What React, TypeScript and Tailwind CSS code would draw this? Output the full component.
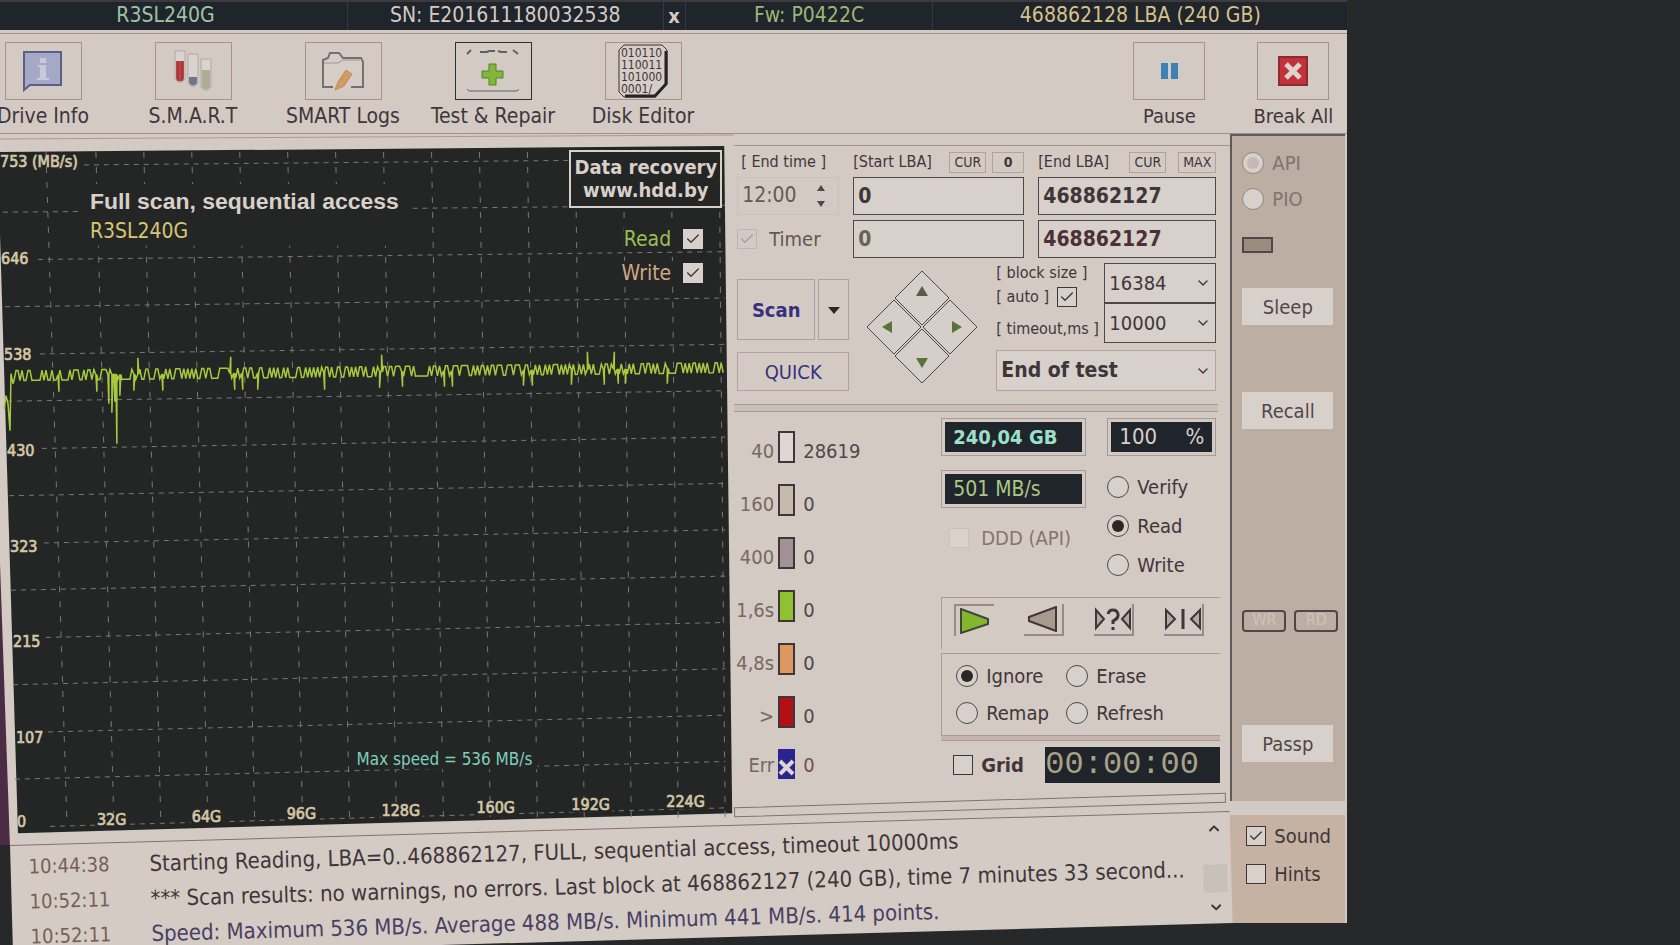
import type { ReactNode } from "react"
import { Check, ChevronDown, ChevronUp } from "lucide-react"

const blocks = [
  { label: "40", count: "28619", color: "bg-[#ded6d0]" },
  { label: "160", count: "0", color: "bg-[#c6bbab]" },
  { label: "400", count: "0", color: "bg-[#a3919a]" },
  { label: "1,6s", count: "0", color: "bg-[#8fc22f]" },
  { label: "4,8s", count: "0", color: "bg-[#dc9861]" },
  { label: ">", count: "0", color: "bg-[#b31015]" },
]

const logs = [
  {
    time: "10:44:38",
    text: "Starting Reading, LBA=0..468862127, FULL, sequential access, timeout 10000ms",
    color: "text-[#40363a]",
  },
  {
    time: "10:52:11",
    text: "*** Scan results: no warnings, no errors. Last block at 468862127 (240 GB), time 7 minutes 33 second...",
    color: "text-[#40363a]",
  },
  {
    time: "10:52:11",
    text: "Speed: Maximum 536 MB/s. Average 488 MB/s. Minimum 441 MB/s. 414 points.",
    color: "text-[#484062]",
  },
]

const yLabels = ["646", "538", "430", "323", "215", "107"]
const xLabels = ["32G", "64G", "96G", "128G", "160G", "192G", "224G"]

// spikes of the speed curve: x, y
const spikes: number[][] = [
  [59, 258], [97, 258], [109, 270], [112, 279], [115, 268], [117, 310], [120, 262], [134, 257], [138, 224],
  [163, 257], [231, 223], [235, 256], [243, 256], [258, 256], [325, 256], [380, 254], [382, 221], [403, 253],
  [445, 253], [453, 253], [524, 252], [533, 252], [572, 251], [588, 218], [605, 251], [615, 218], [619, 250],
  [626, 250], [668, 250],
]

const buildCurve = () => {
  const points: number[][] = [[4, 276], [6, 262], [8, 270], [10, 297], [11, 240], [13, 250]]
  let seed = 11
  let high = true
  for (let x = 14; x < 725; x += 2) {
    seed = (seed * 1103 + 377) % 4099
    const mid = 242 - (x * 8) / 725
    const spike = spikes.find((s) => s[0] >= x && s[0] < x + 2)
    if (spike) {
      points.push([x, mid], spike, [x + 1, mid])
      continue
    }
    if (seed % 10 < 6) high = !high
    points.push([x, high ? mid - 5 : mid + 5])
  }
  return points.map((p) => p.join(",")).join(" ")
}

const CheckBox = ({ id, checked, className = "" }: { id: string; checked?: boolean; className?: string }) => (
  <span className="grid shrink-0 place-items-center">
    <input
      id={id}
      type="checkbox"
      defaultChecked={checked}
      className={`peer h-5 w-5 appearance-none border [grid-area:1/1] ${className || "border-[#40363a] bg-[#d8d0ca]"}`}
    />
    <Check
      strokeWidth={2}
      className={`pointer-events-none hidden h-4 w-4 [grid-area:1/1] peer-checked:block ${id === "timer" ? "text-[#a79ca0]" : "text-[#40363a]"}`}
    />
  </span>
)

const Radio = ({ name, label, checked, className = "" }: { name: string; label: string; checked?: boolean; className?: string }) => (
  <label className={`flex items-center gap-2 text-xl leading-6 ${className}`}>
    <span className="grid shrink-0 place-items-center">
      <input
        type="radio"
        name={name}
        defaultChecked={checked}
        className={`peer h-[22px] w-[22px] appearance-none rounded-full border bg-[#d8d0ca] [grid-area:1/1] ${name === "access" ? "border-[#94877f]" : "border-[#51474a]"}`}
      />
      <span
        className={`pointer-events-none hidden h-3 w-3 rounded-full [grid-area:1/1] peer-checked:block ${name === "access" ? "bg-[#c4bab5]" : "bg-[#2d2629]"}`}
      />
    </span>
    {label}
  </label>
)

const ToolButton = ({ label, active, narrow, children }: { label: string; active?: boolean; narrow?: boolean; children: ReactNode }) => (
  <button className={`flex shrink-0 flex-col items-center gap-1 whitespace-nowrap ${narrow ? "w-[124px]" : "w-[150px]"}`}>
    <span
      className={`flex h-[58px] items-center justify-center border ${narrow ? "w-[72px]" : "w-[77px]"} ${active ? "border-[#2d3038]" : "border-[#a8938c]"}`}
    >
      {children}
    </span>
    <span className={`leading-6 ${narrow ? "text-xl" : "text-[21px]"}`}>{label}</span>
  </button>
)

const TitleBar = () => (
  <header className="grid h-[30px] grid-cols-[347fr_314fr_23fr_247fr_413fr] border-t-2 border-[#3c3a3c] bg-[#20242b] text-center text-[21px] leading-[26px] whitespace-nowrap">
    <div className="border-r border-[#3a364a] pr-4 text-[#9fc3a6]">R3SL240G</div>
    <div className="text-[#d3cbc5]">SN: E201611180032538</div>
    <button className="border-x border-[#3a364a] text-xl leading-6 font-bold text-[#d3cbc5]">x</button>
    <div className="border-r border-[#3a364a] text-[#99b775]">Fw: P0422C</div>
    <div className="text-[#d5c28c]">468862128 LBA (240 GB)</div>
  </header>
)

const Toolbar = () => (
  <div className="mt-[3px] flex h-[101px] items-start justify-between overflow-hidden border-y border-[#a08f8a] pt-2">
    <div className="-ml-8 flex">
      <ToolButton label="Drive Info">
        <svg width="44" height="42" viewBox="0 0 44 42">
          <path d="M3 2h37v33H9l-6 5z" fill="#a4a9c8" stroke="#5c5f83" strokeWidth="2" />
          <path d="M19 8h6v5h-6zM17 15h8v13h3v2H16v-2h3V17h-2z" fill="#c9cad8" />
        </svg>
      </ToolButton>
      <ToolButton label="S.M.A.R.T">
        <svg width="38" height="44" viewBox="0 0 38 44" fill="none" stroke="#b0a7a5">
          <path d="M1 2v28q5 7 10 0V2zM14 5v29q5 7 10 0V5zM27 10v28q5 7 10 0V10z" fill="#dad3cf" />
          <path d="M2 12v18q4 5 8 0V12z" fill="#b5474a" stroke="none" />
          <path d="M4 12v20M8 12v20" stroke="#a0282c" />
          <path d="M15 28v6q4 5 8 0v-6z" fill="#6b7691" stroke="none" />
          <path d="M28 21v17q4 5 8 0V21z" fill="#aeab96" stroke="none" />
        </svg>
      </ToolButton>
      <ToolButton label="SMART Logs">
        <svg width="46" height="40" viewBox="0 0 46 40" fill="none" stroke="#77706f" strokeWidth="2">
          <path d="M13 36H3V9l5-2 2-5h9l4 5h18l2 4v25H31" fill="#d5cdc6" />
          <path d="M4 12h14l5-3h17" stroke="#a09896" strokeWidth="1" />
          <path d="m18 31 8-12 6 4-8 12-9 4z" fill="#d19c64" stroke="#c08a5c" strokeWidth="1" />
        </svg>
      </ToolButton>
      <ToolButton label="Test & Repair" active>
        <svg width="60" height="46" viewBox="0 0 60 46" fill="none" stroke="#655d62" strokeWidth="2">
          <path d="m4 6 4-4M17 4h7l2-1h6M35 3l3 1h6M50 2l5 4" />
          <path d="m4 41 2 2h48l2-2" strokeWidth="1" />
          <path d="M26 16h7v7h7v7h-7v7h-7v-7h-7v-7h7z" fill="#83b63d" stroke="#54812c" strokeWidth="1" />
        </svg>
      </ToolButton>
      <ToolButton label="Disk Editor">
        <svg width="54" height="56" viewBox="0 0 54 56">
          <path d="M8 2h38l5 5v34L39 54H8l-5-5V7z" fill="#d6cdc7" stroke="#3c3035" strokeWidth="1" />
          <path d="M50 8v33L39 53H9" fill="none" stroke="#282226" strokeWidth="3" />
          <g fill="#40363a" fontSize="12">
            <text x="5" y="14">010110</text>
            <text x="5" y="26">110011</text>
            <text x="5" y="38">101000</text>
            <text x="5" y="50">0001/</text>
          </g>
        </svg>
      </ToolButton>
    </div>
    <div className="-mr-2 flex">
      <ToolButton label="Pause" narrow>
        <span className="flex gap-[3px]">
          <span className="h-4 w-[7px] bg-[#3f81b4]" />
          <span className="h-4 w-[7px] bg-[#3f81b4]" />
        </span>
      </ToolButton>
      <ToolButton label="Break All" narrow>
        <svg width="30" height="30" viewBox="0 0 30 30">
          <path d="M1 1h28v28H1z" fill="#c1323b" stroke="#8d2a30" strokeWidth="2" />
          <path d="m8 8 14 14M22 8 8 22" stroke="#ddd3ce" strokeWidth="5" />
        </svg>
      </ToolButton>
    </div>
  </div>
)

const Chart = () => (
  <div className="relative">
    <svg viewBox="0 0 735 712" className="block h-auto w-full" fontSize="16">
      <path d="M0 430 10 714H0z" fill="#4c2c45" />
      <path d="M0 5 735 1" stroke="#a99a97" />
      <path d="M0 18 725 12 733 680 18 700 0 100z" fill="#242625" />
      <g stroke="#7d7673" strokeWidth="1" strokeDasharray="5 5">
        {Array.from({ length: 15 }, (_, i) => (
          <line key={`v${i}`} x1={i ? i * 48 + 48 : 46} y1="18" x2={Math.round(67 + i * 47.1)} y2="690" strokeDasharray="6 9" />
        ))}
        {Array.from({ length: 15 }, (_, i) => (
          <line key={`h${i}`} x1={i === 0 ? 84 : (i % 2 ? 2 : 36) + i} y1={31 + i * 47.3} x2="726" y2={25 + i * 46.4} />
        ))}
      </g>
      <polyline points={buildCurve()} fill="none" stroke="#a9c93d" strokeWidth="1.5" />
      <g fill="#d3c6a6" stroke="#d3c6a6" strokeWidth="0.7">
        <text x="0" y="33">753 (MB/s)</text>
        {yLabels.map((label, i) => (
          <text key={label} x={i * 3 + 1} y={130 + i * 96}>{label}</text>
        ))}
        <text x="17" y="694">0</text>
        {xLabels.map((label, i) => (
          <g key={label}>
            <path d={`M${96 + i * 95} ${680 - i * 3}h${i > 2 ? 42 : 34}v14h-${i > 2 ? 42 : 34}z`} fill="#242625" stroke="none" />
            <text x={97 + i * 95} y={692 - i * 3}>{label}</text>
          </g>
        ))}
      </g>
      <path d="M80 50h333v62H80z" fill="#242625" />
      <path d="M350 616h188v20H350z" fill="#242625" />
      <text x="90" y="75" fill="#d8d0ca" fontSize="23" fontWeight="bold" fontFamily="Liberation Sans, sans-serif">
        Full scan, sequential access
      </text>
      <text x="90" y="104" fill="#d8c672" fontSize="21">R3SL240G</text>
      <text x="357" y="632" fill="#7ed0bd" fontSize="17">Max speed = 536 MB/s</text>
    </svg>
    <a
      href="http://www.hdd.by"
      className="absolute top-4 right-3 border-2 border-[#d8d0ca] bg-[#242625] px-[3px] py-1 text-center text-xl leading-[23px] font-bold whitespace-nowrap text-[#d8d0ca]"
    >
      Data recovery
      <br />
      www.hdd.by
    </a>
    <div className="absolute top-[93px] right-[31px] flex flex-col items-end gap-[10px] text-[21px] leading-6">
      <label className="flex items-center gap-3 bg-[#242625] text-[#9dbd55]">
        Read <CheckBox id="showRead" checked className="border-[#d8d0ca] bg-[#d8d0ca]" />
      </label>
      <label className="flex items-center gap-3 bg-[#242625] text-[#cda982]">
        Write <CheckBox id="showWrite" checked className="border-[#d8d0ca] bg-[#d8d0ca]" />
      </label>
    </div>
  </div>
)

const smallButton = "h-[21px] border border-[#b5a09b] px-1 text-sm leading-[18px]"
const lbaInput = "h-[38px] w-full min-w-0 border border-[#51474a] bg-[#d8d0ca] px-1 text-[21px] font-bold"

const Select = ({ id, value, className }: { id: string; value: string; className: string }) => (
  <span className={`grid items-center border bg-[#d8d0ca] ${className}`}>
    <select id={id} defaultValue={value} aria-label={id} className="h-full w-full min-w-0 appearance-none px-1 [grid-area:1/1]">
      <option>{value}</option>
    </select>
    <ChevronDown strokeWidth={2} className="pointer-events-none mr-1 h-4 w-4 justify-self-end [grid-area:1/1]" />
  </span>
)

const Settings = () => (
  <section className="h-[259px] border-t border-[#a08f8a] pt-[6px] pr-[14px] pl-[3px]">
    <div className="grid grid-cols-[102px_170fr_177fr] gap-x-[14px] gap-y-[5px]">
      <label htmlFor="endTime" className="flex h-5 items-center pl-1 text-base whitespace-nowrap">[ End time ]</label>
      <div className="flex h-5 items-center justify-between whitespace-nowrap">
        <label htmlFor="startLba" className="text-base">[Start LBA]</label>
        <span className="flex gap-[6px]">
          <button className={smallButton}>CUR</button>
          <button className={`${smallButton} w-8 font-bold`}>0</button>
        </span>
      </div>
      <div className="flex h-5 items-center justify-between whitespace-nowrap">
        <label htmlFor="endLba" className="text-base">[End LBA]</label>
        <span className="flex gap-3">
          <button className={smallButton}>CUR</button>
          <button className={smallButton}>MAX</button>
        </span>
      </div>
      <div className="flex h-[38px] items-center justify-between border border-[#c9c0b7] pr-3 pl-1 text-[#635a50]">
        <input id="endTime" defaultValue="12:00" className="w-[70px] bg-transparent text-[21px]" />
        <svg width="10" height="22" viewBox="0 0 10 22" fill="#51474a"><path d="M5 0l4 6H1zM5 22l4-6H1z" /></svg>
      </div>
      <input id="startLba" defaultValue="0" className={lbaInput} />
      <input id="endLba" defaultValue="468862127" className={lbaInput} />
      <label className="flex h-[38px] items-center gap-3 text-xl text-[#625757]">
        <CheckBox id="timer" checked className="border-[#c0b3b3]" />
        Timer
      </label>
      <input aria-label="Current LBA" defaultValue="0" className={`${lbaInput} text-[#6b6254]`} />
      <input aria-label="Last LBA" defaultValue="468862127" className={`${lbaInput} text-[#4c3038]`} />
    </div>
    <div className="mt-[5px] flex justify-between">
      <div className="mt-4 w-[112px]">
        <div className="flex gap-[3px]">
          <button className="h-[61px] flex-1 border border-[#b09dae] text-xl font-bold text-[#35317c]">Scan</button>
          <button aria-label="Scan options" className="flex w-[31px] items-center justify-center border border-[#b09dae]">
            <svg width="12" height="8" viewBox="0 0 12 8"><path d="M0 1h12L6 8z" fill="#2d2629" /></svg>
          </button>
        </div>
        <button className="mt-3 h-[39px] w-full border border-[#b5a0a5] text-xl text-[#35317c]">QUICK</button>
      </div>
      <svg width="114" height="114" viewBox="0 0 114 114" className="mt-[7px] shrink-0">
        <g fill="#d6cec8" stroke="#51474a" strokeWidth="1">
          <path d="M56 1 83 28 56 55 29 28zM28 30 55 57 28 84 1 57zM84 30 111 57 84 84 57 57zM56 59 83 86 56 113 29 86z" />
        </g>
        <path d="m50 26 6-10 6 10z" fill="#5a5a48" />
        <path d="m26 51-10 6 10 6zM86 51l10 6-10 6zM50 88l6 10 6-10z" fill="#55753a" />
      </svg>
      <div className="flex w-[220px] flex-col gap-[7px]">
        <div className="flex justify-between">
          <div className="flex flex-col text-base whitespace-nowrap">
            <label htmlFor="block size" className="leading-5">[ block size ]</label>
            <label className="flex h-7 items-center gap-2">[ auto ] <CheckBox id="auto" checked /></label>
            <label htmlFor="timeout" className="mt-2 leading-5">[ timeout,ms ]</label>
          </div>
          <div className="w-[112px] text-xl">
            <Select id="block size" value="16384" className="h-10 border-[#51474a]" />
            <Select id="timeout" value="10000" className="h-10 border-[#51474a]" />
          </div>
        </div>
        <Select id="end action" value="End of test" className="h-[41px] border-[#b5a09b] text-[21px] font-bold" />
      </div>
    </div>
  </section>
)

const Counters = () => (
  <div className="w-[203px] shrink-0 pt-[19px]">
    {blocks.map((block) => (
      <div key={block.label} className="flex h-[53px] items-start text-xl text-[#51474a]">
        <span className="w-11 pt-2 pr-1 text-right leading-6 text-[#76695f]">{block.label}</span>
        <span className={`h-8 w-[17px] border-2 border-[#40363a] ${block.color}`} />
        <span className="pt-2 pl-2 leading-6">{block.count}</span>
      </div>
    ))}
    <div className="flex items-start text-xl text-[#51474a]">
      <span className="w-11 pt-1 pr-1 text-right leading-6 text-[#76695f]">Err</span>
      <svg width="17" height="30" viewBox="0 0 17 30">
        <path d="M0 0h17v30H0z" fill="#29258c" />
        <path d="m2 12 13 13M15 12 2 25" stroke="#ddd5d0" strokeWidth="4" />
      </svg>
      <span className="pt-1 pl-2 leading-6 text-[#75504d]">0</span>
    </div>
  </div>
)

const raised = "flex h-8 w-10 items-center justify-center border-r-2 border-b-2 border-[#978b87]"

const Monitor = () => (
  <div className="min-w-0 flex-1 pt-[6px] pr-[10px]">
    <div className="flex justify-between pr-1 pl-1">
      <div className="flex w-[145px] flex-col gap-[14px]">
        <output className="block h-[38px] border border-[#a99a97] p-[3px]">
          <span className="block h-full bg-[#20242b] px-2 text-xl leading-[30px] font-bold text-[#9ce0cb]">240,04 GB</span>
        </output>
        <output className="block h-[38px] border border-[#a99a97] p-[3px]">
          <span className="block h-full bg-[#20242b] px-2 text-[21px] leading-[30px] text-[#abc785]">501 MB/s</span>
        </output>
        <label className="mt-1 flex items-center gap-3 pl-2 text-xl leading-6 whitespace-nowrap text-[#85736b]">
          <CheckBox id="ddd" className="border-[#cbc2bd] bg-[#d9d2cd]" />
          DDD (API)
        </label>
      </div>
      <div className="flex w-[109px] flex-col gap-[15px]">
        <output className="mb-1 block h-[38px] border border-[#a99a97] p-[3px]">
          <span className="flex h-full justify-between bg-[#20242b] px-2 text-[22px] leading-[30px] text-[#d8d0ca]">
            <span>100</span>
            <span>%</span>
          </span>
        </output>
        <Radio name="mode" label="Verify" />
        <Radio name="mode" label="Read" checked />
        <Radio name="mode" label="Write" />
      </div>
    </div>
    <div className="mt-5 ml-1 flex h-[52px] items-start justify-between border-t border-l border-[#a99a97] pt-[6px] pr-4 pl-3">
      <button aria-label="Forward" className="flex h-8 w-10 items-center justify-center border-t-2 border-l-2 border-[#978b87]">
        <svg width="30" height="26" viewBox="0 0 30 26"><path d="M1 1v24l27-9v-5z" fill="#84b52f" stroke="#40463a" strokeWidth="2" /></svg>
      </button>
      <button aria-label="Backward" className={raised}>
        <svg width="30" height="26" viewBox="0 0 30 26"><path d="M28 1v24L1 15v-4z" fill="#a69b8d" stroke="#40363a" strokeWidth="2" /></svg>
      </button>
      <button aria-label="Random" className={raised}>
        <svg width="36" height="26" viewBox="0 0 36 26" fill="none" stroke="#40363a">
          <path d="M1 4v18l8-9zM35 4v18l-8-9z" fill="#b3a9a1" strokeWidth="2" />
          <path d="M13 8q1-4 5-4t5 4-5 7v3M18 21v3" strokeWidth="3" />
        </svg>
      </button>
      <button aria-label="Butterfly" className={raised}>
        <svg width="36" height="26" viewBox="0 0 36 26" fill="none" stroke="#40363a">
          <path d="M1 4v18l9-9zM35 4v18l-9-9z" fill="#b3a9a1" strokeWidth="2" />
          <path d="M18 3v20" strokeWidth="3" />
        </svg>
      </button>
    </div>
    <div className="mt-1 ml-1 grid grid-cols-[110px_1fr] content-center gap-y-[13px] border-t border-l border-[#a99a97] pt-[10px] pb-[10px] pl-[14px]">
      <Radio name="errors" label="Ignore" checked />
      <Radio name="errors" label="Erase" />
      <Radio name="errors" label="Remap" />
      <Radio name="errors" label="Refresh" />
    </div>
    <div className="ml-1 h-[6px] border-y border-[#a99a97] bg-[#c5b5ae]" />
    <div className="mt-[6px] ml-4 flex items-center justify-between">
      <label className="flex items-center gap-2 text-xl font-bold">
        <CheckBox id="grid" />
        Grid
      </label>
      <time className="block h-9 w-[175px] bg-[#20242b] font-['Liberation_Mono',monospace] text-[32px] leading-9 text-[#aaa287]">00:00:00</time>
    </div>
  </div>
)

const Sidebar = () => (
  <aside className="flex flex-col gap-[14px] border-r-2 border-[#d3cac4] text-xl">
    <div className="flex h-[667px] flex-col items-start border-t-2 border-l-2 border-[#62595c] bg-[#bdaea3] pt-[15px] pl-[10px] text-[#80736f]">
      <Radio name="access" label="API" checked />
      <Radio name="access" label="PIO" className="mt-3" />
      <span className="mt-[26px] h-4 w-[31px] border-2 border-[#51474a] bg-[#9c8b7f]" />
      <button className="mt-[35px] h-[37px] w-[91px] bg-[#d8d0ca] text-[#51474a]">Sleep</button>
      <button className="mt-[67px] h-[37px] w-[91px] bg-[#d8d0ca] text-[#51474a]">Recall</button>
      <div className="mt-[181px] flex gap-2 text-base leading-4 text-[#d0c2b9]">
        <span className="h-[22px] w-11 rounded-sm border-2 border-[#51474a] text-center">WR</span>
        <span className="h-[22px] w-11 rounded-sm border-2 border-[#51474a] text-center">RD</span>
      </div>
      <button className="mt-[93px] h-[37px] w-[91px] bg-[#d8d0ca] text-[#51474a]">Passp</button>
    </div>
    <div className="flex h-[108px] flex-col gap-[14px] bg-[#c5b2a3] pt-[9px] pl-4">
      <label className="flex items-center gap-2 leading-6"><CheckBox id="sound" checked /> Sound</label>
      <label className="flex items-center gap-2 leading-6"><CheckBox id="hints" /> Hints</label>
    </div>
  </aside>
)

// the log hangs slightly tilted, its lower right corner shows the desk
const Log = () => (
  <div className="ml-[10px] flex h-[112px] origin-top-left -rotate-[1.6deg] border-t border-[#80736f] bg-[#d4cbc5]">
    <ol className="min-w-0 flex-1 overflow-hidden pt-1 pl-[18px] text-[22px] leading-[35px] whitespace-nowrap">
      {logs.map((log) => (
        <li key={log.text} className="flex">
          <time className="w-[121px] shrink-0 text-xl leading-[35px] text-[#766154]">{log.time}</time>
          <span className={log.color}>{log.text}</span>
        </li>
      ))}
    </ol>
    <div className="flex w-8 flex-col items-center justify-between py-2">
      <ChevronUp strokeWidth={3} className="h-4 w-4" />
      <span className="mt-5 h-7 w-6 bg-[#c9c1b9]" />
      <ChevronDown strokeWidth={3} className="h-4 w-4" />
    </div>
  </div>
)

const App = () => {
  return (
    <div className="h-screen overflow-hidden bg-[#26282a] font-['DejaVu_Sans_Condensed','DejaVu_Sans',sans-serif] text-[#40363a]">
      <main className="w-[80.2%]">
        <TitleBar />
        <div className="flow-root bg-[#d3cac4]">
          <Toolbar />
        </div>
        <div className="grid grid-cols-[1230fr_117fr] items-start">
          <div className="min-w-0">
            <div className="grid grid-cols-[734fr_496fr] bg-[#d3cac4]">
              <Chart />
              <div className="min-w-0 pt-[11px]">
                <Settings />
                <div className="mr-3 h-2 border-y border-[#a99a97] bg-[#c9bfb7]" />
                <div className="flex">
                  <Counters />
                  <Monitor />
                </div>
                <div className="mt-[17px] mr-1 h-[10px] -rotate-[1.7deg] border border-[#80736f]" />
              </div>
            </div>
            <Log />
          </div>
          <div className="bg-[#d3cac4]">
            <Sidebar />
          </div>
        </div>
      </main>
    </div>
  )
}

export default App
